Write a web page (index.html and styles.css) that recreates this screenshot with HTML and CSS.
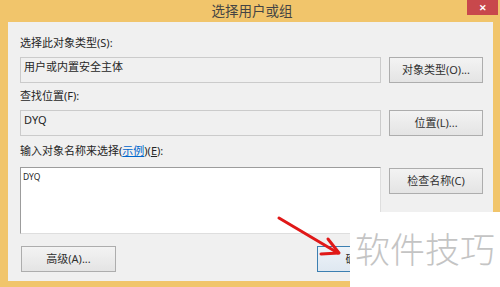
FILE: index.html
```html
<!DOCTYPE html>
<html lang="zh-CN">
<head>
    <meta charset="UTF-8">
    <title>选择用户或组</title>
    <link rel="stylesheet" href="styles.css">
</head>
<body>
    <div class="window">
        <div class="titlebar">
            <span class="title">选择用户或组</span>
            <span class="close">&#x2715;</span>
        </div>
        <div class="panel">
            <div class="field-label first">选择此对象类型(S):</div>
            <div class="row">
                <div class="box">用户或内置安全主体</div>
                <div class="btn">对象类型(O)...</div>
            </div>
            <div class="field-label">查找位置(F):</div>
            <div class="row">
                <div class="box">DYQ</div>
                <div class="btn">位置(L)...</div>
            </div>
            <div class="field-label third">输入对象名称来选择(<a class="link">示例</a>)(<u>E</u>):</div>
            <div class="row">
                <div class="names">DYQ</div>
                <div class="btn check">检查名称(C)</div>
            </div>
            <div class="footer">
                <div class="btn wide">高级(A)...</div>
                <div class="actions">
                    <div class="btn small default">确定</div>
                    <!-- botón cancelar, tapado por la marca de agua -->
                    <div class="btn small"></div>
                </div>
            </div>
        </div>

        <!-- 标注箭头 -->
        <svg class="arrow" width="500" height="287" viewBox="0 0 500 287">
            <line x1="279" y1="218" x2="338" y2="253" stroke="#e01818" stroke-width="3" stroke-linecap="round"/>
            <polyline points="328,239 339,253 321,254" fill="none" stroke="#e01818" stroke-width="3" stroke-linecap="round" stroke-linejoin="round"/>
        </svg>

        <div class="watermark">软件技巧</div>
    </div>
</body>
</html>
```

FILE: styles.css
```css
body {
    margin: 0;
    font-family: "Noto Sans", "Noto Sans CJK SC", sans-serif;
    color: #262626;
    overflow: hidden;
}

.window {
    position: relative;
    width: 500px;
    height: 287px;
    background-color: #f1c56b; /* marco naranja de Windows 8 */
    display: flex;
    flex-direction: column;
}

.titlebar {
    height: 22px;
    display: grid;
    grid-template-columns: 1fr auto 1fr;
    align-items: center;
}

.title {
    grid-column: 2;
    font-size: 13.5px;
    line-height: 22px;
    color: #444444;
    padding-left: 4px;
}

.close {
    grid-column: 3;
    justify-self: end;
    align-self: start;
    width: 31px;
    height: 15px;
    margin-right: 2px;
    background-color: #c8484c;
    color: #ffffff;
    font-size: 9px;
    line-height: 15px;
    text-align: center;
    font-weight: bold;
}

.panel {
    flex: 1;
    margin: 0 7px 6px 8px;
    padding: 13px 10px 0 12px;
    background-color: #f0f0f0;
    display: flex;
    flex-direction: column;
}

.field-label {
    font-size: 11px;
    line-height: 16px;
    height: 16px;
    margin: 5px 0 6px;
}

.field-label.first {
    margin-top: 0;
}

.field-label.third {
    margin: 7px 0 8px;
}

.link {
    color: #0066cc;
    text-decoration: underline;
}

.row {
    display: grid;
    grid-template-columns: 361px 94px;
    column-gap: 8px;
    align-items: start;
}

.box {
    box-sizing: border-box;
    height: 26px;
    border: 1px solid #cbcbcb;
    padding: 1px 3px;
    font-size: 11px;
    line-height: 16px;
}

.names {
    box-sizing: border-box;
    height: 67px;
    background-color: #ffffff;
    border: 1px solid #dedede;
    border-top-color: #9c9c9c;
    border-left-color: #9c9c9c;
    padding: 3px 2px;
    font-size: 8.5px;
    line-height: 12px;
}

.btn {
    box-sizing: border-box;
    height: 26px;
    border: 1px solid #adadad;
    background: linear-gradient(#f3f3f3, #e4e4e4);
    font-size: 11px;
    line-height: 24px;
    text-align: center;
    color: #303030;
}

.btn.check {
    margin-top: 1px;
}

.footer {
    margin-top: 12px;
    display: flex;
    justify-content: space-between;
}

.btn.wide {
    width: 95px;
    margin-left: 1px;
}

.actions {
    display: flex;
    gap: 8px;
}

.btn.small {
    width: 79px;
}

.btn.default {
    border-color: #3c7fb1;
    background: linear-gradient(#edf3f8, #dfe8f1);
}

.arrow {
    position: absolute;
    left: 0;
    top: 0;
}

.watermark {
    position: absolute;
    left: 350px;
    top: 212px;
    width: 150px;
    height: 75px;
    box-sizing: border-box;
    padding: 18px 0 0 5px;
    background-color: #ffffff;
    color: #c4c4c4;
    font-family: "Noto Sans CJK SC", sans-serif;
    font-weight: 300;
    font-size: 35px;
    line-height: 35px;
    white-space: nowrap;
}
```
